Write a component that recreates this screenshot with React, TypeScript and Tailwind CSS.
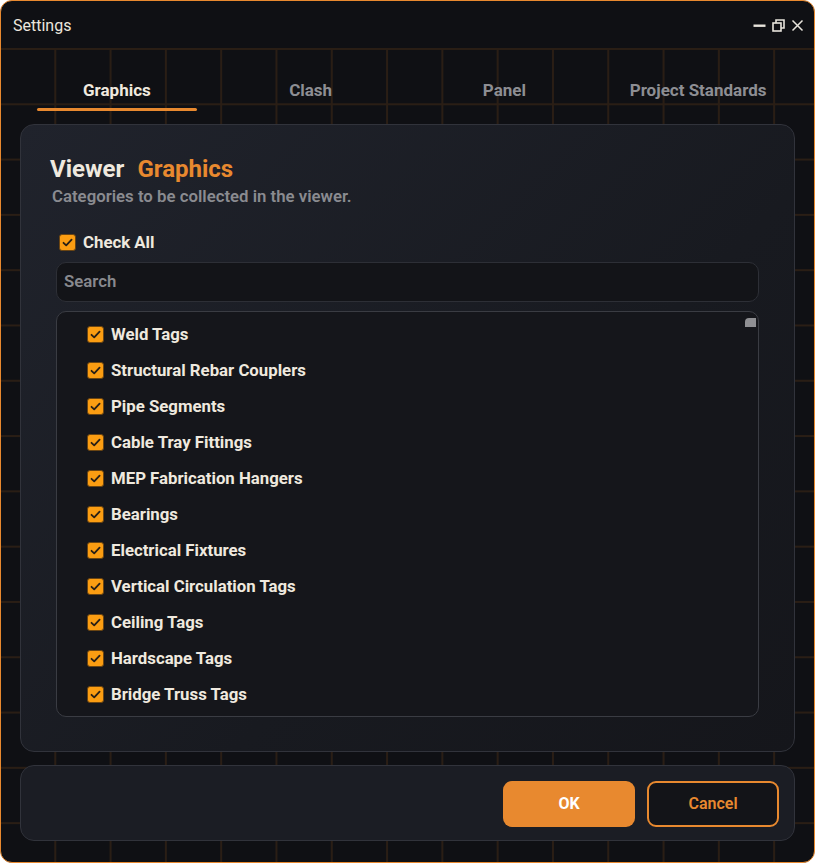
import React from "react";

const items = [
  "Weld Tags",
  "Structural Rebar Couplers",
  "Pipe Segments",
  "Cable Tray Fittings",
  "MEP Fabrication Hangers",
  "Bearings",
  "Electrical Fixtures",
  "Vertical Circulation Tags",
  "Ceiling Tags",
  "Hardscape Tags",
  "Bridge Truss Tags",
];

function Check() {
  return (
    <span className="flex h-[17px] w-[17px] shrink-0 items-center justify-center rounded-[3px] border border-[#6b4512] bg-[#fb9d12]">
      <svg width="13" height="13" viewBox="0 0 13 13" fill="none">
        <path d="M2.5 6.8 L5.2 9.4 L10.6 3.6" stroke="#2a2016" strokeWidth="1.8" strokeLinecap="round" strokeLinejoin="round" />
      </svg>
    </span>
  );
}

export default function App() {
  const tabs = ["Graphics", "Clash", "Panel", "Project Standards"];
  return (
    <div
      className="flex h-[863px] w-[815px] flex-col overflow-hidden rounded-[12px] border border-[#e8892f] bg-[#0f1014] text-[#ece7de]"
      style={{ fontFamily: "Roboto, 'Noto Sans', sans-serif" }}
    >
      {/* Title bar */}
      <div className="flex h-[47px] shrink-0 items-center justify-between pl-[12px] pr-[10px] pt-[2px]">
        <span className="text-[16px] leading-[20px] text-[#ece7de]">Settings</span>
        <div className="flex items-center gap-[6px] text-[#e8e4dc]">
          <svg width="13" height="13" viewBox="0 0 13 13">
            <rect x="0.5" y="5.5" width="12" height="2.4" fill="#e8e4dc" />
          </svg>
          <svg width="13" height="13" viewBox="0 0 13 13" fill="none" stroke="#e8e4dc" strokeWidth="1.6">
            <rect x="1" y="4" width="8" height="8" />
            <path d="M4 4 V1 H12 V9 H9" />
          </svg>
          <svg width="13" height="13" viewBox="0 0 13 13" fill="none" stroke="#e8e4dc" strokeWidth="1.5">
            <path d="M1.5 1.5 L11.5 11.5 M11.5 1.5 L1.5 11.5" />
          </svg>
        </div>
      </div>

      {/* Body with grid */}
      <div className="flex flex-1 flex-col bg-[linear-gradient(to_right,#2a1e15_2px,transparent_2px),linear-gradient(to_bottom,#2a1e15_2px,transparent_2px)] bg-[size:55.3px_55.3px] bg-[position:-2px_0px] px-[19px]">
        {/* Tabs */}
        <div className="grid h-[63px] grid-cols-4">
          {tabs.map((t, i) => (
            <div key={t} className="flex flex-col items-center px-[17px] pt-[32px]">
              <span
                className={
                  "text-[17px] font-bold leading-[21px] " +
                  (i === 0 ? "text-[#efe9df]" : "text-[#8d8e93]")
                }
              >
                {t}
              </span>
              <div
                className={
                  "mt-[7px] h-[3px] w-full rounded-full " + (i === 0 ? "bg-[#e8892f]" : "bg-transparent")
                }
              />
            </div>
          ))}
        </div>

        {/* Main card */}
        <div className="mt-[13px] flex h-[628px] flex-col rounded-[14px] border border-[#31333b] bg-[linear-gradient(135deg,#20232c_0%,#181a20_60%,#15161b_100%)] px-[35px] pt-[29px]">
          <div className="-ml-[6px] flex items-baseline gap-[13px]">
            <span className="text-[24px] font-bold leading-[30px] text-[#efe9df]">Viewer</span>
            <span className="text-[24px] font-bold leading-[30px] text-[#e8892f]">Graphics</span>
          </div>
          <div className="-ml-[4px] mt-[2px] text-[16.8px] font-semibold leading-[20px] text-[#8a8b90]">
            Categories to be collected in the viewer.
          </div>

          <div className="mt-[26px] flex items-center gap-[7px] pl-[3px]">
            <Check />
            <span className="text-[16.8px] font-bold leading-[20px] text-[#efe9df]">Check All</span>
          </div>

          <div className="mt-[10px] flex h-[40px] items-center rounded-[10px] border border-[#2d2f36] bg-[#131418] px-[7px]">
            <span className="text-[16.8px] font-semibold text-[#88898e]">Search</span>
          </div>

          <div className="relative mt-[9px] h-[406px] overflow-hidden rounded-[10px] border border-[#3a3c43] bg-[#15161b] pb-[4px] pt-[4px] pl-[30px]">
            <div className="absolute right-[2px] top-[6px] h-[9px] w-[11px] rounded-tl-[4px] bg-[#8f8f93]" />
            {items.map((it) => (
              <div key={it} className="flex h-[36px] items-center gap-[7px]">
                <Check />
                <span className="text-[16.8px] font-bold leading-[20px] text-[#efe9df]">{it}</span>
              </div>
            ))}
          </div>
        </div>

        {/* Footer */}
        <div className="mt-[13px] flex h-[76px] items-center justify-end gap-[12px] rounded-[14px] border border-[#31333b] bg-[#1b1d24] pr-[15px] pt-[2px]">
          <button className="h-[46px] w-[132px] rounded-[9px] bg-[#e8892f] text-[16px] font-bold text-white">
            OK
          </button>
          <button className="h-[46px] w-[132px] rounded-[9px] border-2 border-[#e8892f] bg-[#131418] text-[16px] font-semibold text-[#e8892f]">
            Cancel
          </button>
        </div>
      </div>
    </div>
  );
}
